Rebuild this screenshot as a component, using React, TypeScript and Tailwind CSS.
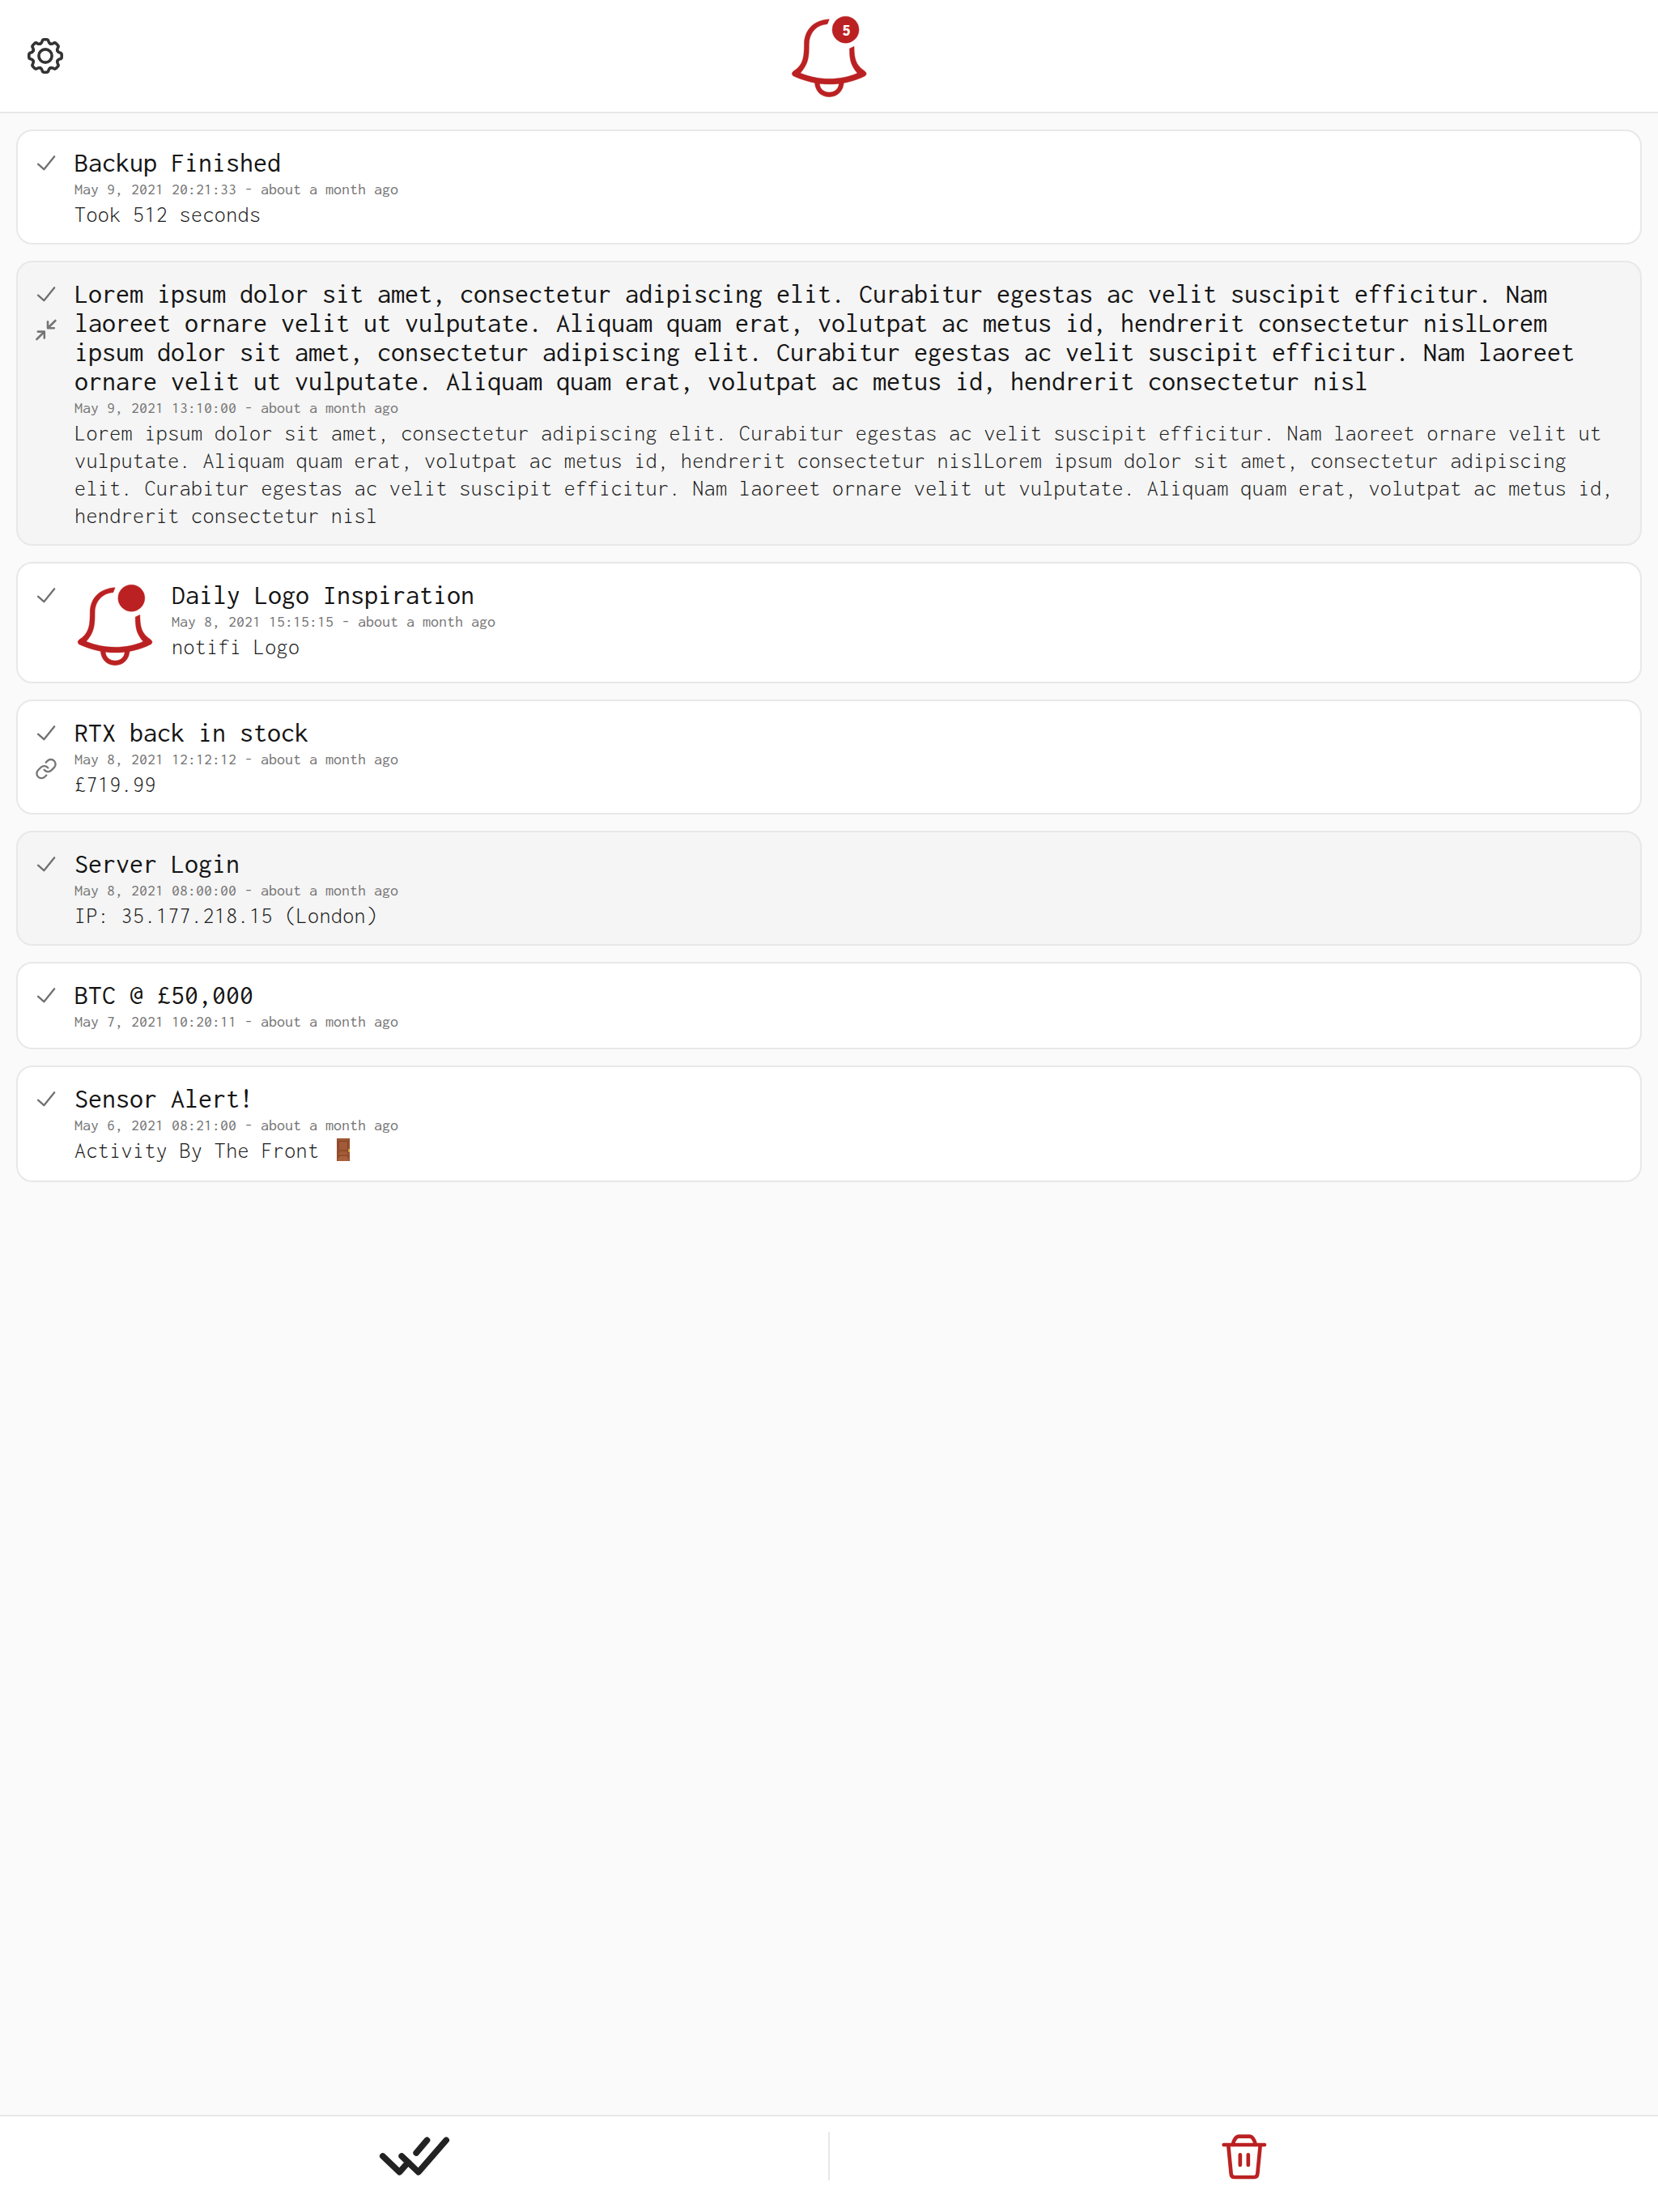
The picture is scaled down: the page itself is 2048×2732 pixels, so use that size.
type Side = "reduce" | "link";

interface Notification {
  title: string;
  date: string;
  message?: string;
  read?: boolean;
  image?: boolean;
  door?: boolean;
  side?: Side;
}

const LOREM =
  "Lorem ipsum dolor sit amet, consectetur adipiscing elit. Curabitur egestas ac velit suscipit efficitur. Nam laoreet ornare velit ut vulputate. Aliquam quam erat, volutpat ac metus id, hendrerit consectetur nisl";

const notifications: Notification[] = [
  { title: "Backup Finished", date: "May 9, 2021 20:21:33", message: "Took 512 seconds" },
  { title: LOREM + LOREM, date: "May 9, 2021 13:10:00", message: LOREM + LOREM, read: true, side: "reduce" },
  { title: "Daily Logo Inspiration", date: "May 8, 2021 15:15:15", message: "notifi Logo", image: true },
  { title: "RTX back in stock", date: "May 8, 2021 12:12:12", message: "£719.99", side: "link" },
  { title: "Server Login", date: "May 8, 2021 08:00:00", message: "IP: 35.177.218.15 (London)", read: true },
  { title: "BTC @ £50,000", date: "May 7, 2021 10:20:11" },
  { title: "Sensor Alert!", date: "May 6, 2021 08:21:00", message: "Activity By The Front ", door: true },
];

function BellShape() {
  return (
    <g fill="#bb2122" stroke="#bb2122" strokeWidth="1.2" strokeLinejoin="round">
      <path d="M253 71L246 89C205 92 178 122 178 165C178 215 175 237 146 271C180 285 215 292 253 292C291 292 327 285 357 271C333 243 328 222 328 180L345 172C346 218 350 240 384 263Q396 272 386 281C345 302 300 312 253 312C206 312 160 300 119 281Q110 272 120 264C155 242 160 215 160 165C160 108 198 74 253 71Z" />
      <path d="M199 300C199 340 225 359 253 359S307 340 307 300L289 307C289 330 272 342 253 342S217 330 217 307Z" />
      <circle cx="313.5" cy="110" r="49.5" />
    </g>
  );
}

const gearTeeth = [0, 45, 90, 135, 180, 225, 270, 315];

function GearIcon() {
  return (
    <svg className="size-11" viewBox="-22 -22 44 44" fill="none" stroke="#333333" strokeWidth="3.6" strokeLinecap="round" strokeLinejoin="round">
      <circle r="8.1" />
      {gearTeeth.map((angle) => (
        <path
          key={angle}
          transform={`rotate(${angle})`}
          d="M-6.2 -15C-4.900 -15.600 -4.200 -16.500 -4 -17.700C-3.700 -19.400 -2.600 -20.200 -1.400 -20.200H1.400C2.600 -20.200 3.700 -19.400 4 -17.700C4.200 -16.500 4.900 -15.600 6.200 -15"
        />
      ))}
    </svg>
  );
}

function CheckIcon() {
  return (
    <svg className="size-7" viewBox="0 0 28 28" fill="none" stroke="#707070" strokeWidth="2.3" strokeLinecap="round" strokeLinejoin="round">
      <path d="M4 15.7L11.3 22.2L24.2 6.3" />
    </svg>
  );
}

function ReduceIcon() {
  return (
    <svg className="size-7" viewBox="0 0 28 28" fill="none" stroke="#757575" strokeWidth="2.6" strokeLinecap="round" strokeLinejoin="round">
      <path d="M25.4 3L16 12.2M16 4.2V12.2H23.8M2.4 26L11.8 16.6M3.8 16.6H11.8V24.4" />
    </svg>
  );
}

function LinkIcon() {
  return (
    <svg className="size-7" viewBox="0 0 24 24" fill="none" stroke="#757575" strokeWidth="2" strokeLinecap="round" strokeLinejoin="round">
      <path d="M10 13.5a5 5 0 0 0 7.54.54l3-3a5 5 0 0 0-7.07-7.07l-1.72 1.71" />
      <path d="M14 11.5a5 5 0 0 0-7.54-.54l-3 3a5 5 0 0 0 7.07 7.07l1.71-1.71" />
    </svg>
  );
}

function DoorIcon() {
  return (
    <svg className="mt-0.5 ml-[7px] h-7 w-4 self-start" viewBox="0 0 16 28">
      <rect width="16" height="28" fill="#8f4a2b" />
      <rect x="1.2" y="1.2" width="13.6" height="26.8" fill="#a9603c" />
      <rect x="1.8" y="2.8" width="12.4" height="11" fill="#7d3f24" />
      <rect x="2.8" y="4" width="10.4" height="9.8" fill="#a35a38" />
      <rect x="1.8" y="14.6" width="12.4" height="4.4" fill="#7d3f24" />
      <rect x="2.8" y="15.6" width="10.4" height="3.4" fill="#a35a38" />
      <rect x="1.8" y="20.4" width="12.4" height="4.6" fill="#7d3f24" />
      <path d="M3.4 21.4H12.6L14.2 25H1.8Z" fill="#a9603c" />
      <rect x="14" y="13" width="2" height="4" fill="#c9a227" />
    </svg>
  );
}

function Card({ n }: { n: Notification }) {
  return (
    <article
      className={`flex rounded-[20px] border-2 border-[#e8e8e8] pr-[22px] pt-[21px] pb-[18px] ${n.read ? "bg-[#f5f5f5]" : "bg-white"}`}
    >
      <div className="flex w-[70px] shrink-0 flex-col items-center gap-4 pt-1">
        <CheckIcon />
        {n.side === "reduce" && <ReduceIcon />}
        {n.side === "link" && <LinkIcon />}
      </div>
      {n.image && (
        <svg className="mt-[3px] mr-4 size-[104px] shrink-0" viewBox="102.5 54 312 312">
          <BellShape />
        </svg>
      )}
      <div className="min-w-0 flex-1">
        <h2 className="mb-px text-[34px] leading-9 font-normal text-[#141414]">{n.title}</h2>
        <p className="text-xl leading-7 text-[#757575]">{n.date} - about a month ago</p>
        {n.message && (
          <p className={`text-[28px] leading-[34px] font-light tracking-[0.4px] text-[#1a1a1a] ${n.door ? "flex h-9 whitespace-pre" : ""}`}>
            {n.message}
            {n.door && <DoorIcon />}
          </p>
        )}
      </div>
    </article>
  );
}

export default function App() {
  return (
    <div className="flex h-[2732px] w-[2048px] flex-col bg-[#fafafa] font-['Inconsolata','Liberation_Mono',monospace]">
      <header className="grid h-[140px] shrink-0 grid-cols-3 items-center border-b-2 border-[#e8e8e8] bg-white">
        <div className="pl-[34px]">
          <GearIcon />
        </div>
        <div className="flex h-[138px] justify-center">
          <svg className="h-[138px] w-[170px]" viewBox="-3 0 510 414">
            <BellShape />
            <text x="315.5" y="132" textAnchor="middle" className="font-['Inconsolata',monospace] text-[60px] font-black" fill="#ffffff">
              5
            </text>
          </svg>
        </div>
      </header>

      <main className="flex flex-1 flex-col gap-5 px-5 pt-5">
        {notifications.map((n) => (
          <Card key={n.title} n={n} />
        ))}
      </main>

      <footer className="flex h-[120px] shrink-0 items-start border-t-2 border-[#e8e8e8] bg-white">
        <button className="flex h-full flex-1 items-start justify-center" aria-label="Mark all as read">
          <svg className="h-[118px] w-[180px]" viewBox="4.5 42 540 354" fill="none" stroke="#222222" strokeWidth="23" strokeLinecap="round" strokeLinejoin="round">
            <path d="M157 189L219 248L242 222M227 189L289 248L392 130M281 177L321 130" />
          </svg>
        </button>
        <div className="mt-[19px] h-[60px] w-0.5 bg-[#e8e8e8]" />
        <button className="flex h-full flex-1 items-start justify-center" aria-label="Delete all">
          <svg className="h-[118px] w-[120px]" viewBox="-10 42 360 354" fill="none" stroke="#bb2122" strokeWidth="14" strokeLinecap="round" strokeLinejoin="round">
            <path d="M94 147H245M127 147Q135 116 150 116H190Q204 116 212 147M111 150L121 254Q122 267 134 267H206Q218 267 219 254L229 150M154.500 184V222M184.500 184V222" />
          </svg>
        </button>
      </footer>
    </div>
  );
}
